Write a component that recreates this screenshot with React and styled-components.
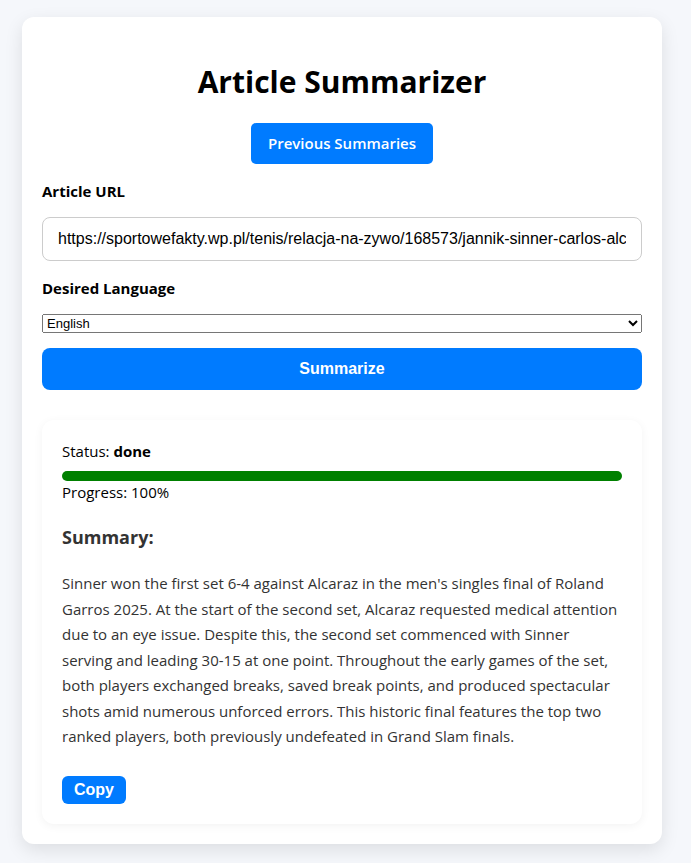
import React, { useState } from "react";
import styled, { createGlobalStyle } from "styled-components";

const GlobalStyle = createGlobalStyle`
  * { box-sizing: border-box; }
  body {
    margin: 0;
    background: #f5f7fb;
    color: #000;
    font-family: "Segoe UI", "Open Sans", "Noto Sans", sans-serif;
    font-size: 15px;
    line-height: 20px;
  }
`;

const Card = styled.main`
  max-width: 640px;
  margin: 17px auto 19px 22px;
  padding: 44px 20px 20px;
  background: #fff;
  border-radius: 12px;
  box-shadow: 0 6px 18px rgba(0, 0, 0, 0.1);
  display: flex;
  flex-direction: column;
`;

const Title = styled.h1`
  margin: 0 0 20px;
  font-size: 30px;
  line-height: 42px;
  font-weight: 700;
  text-align: center;
`;

const HistoryLink = styled.a`
  align-self: center;
  padding: 10px 17px;
  border-radius: 5px;
  background: #007bff;
  color: #fff;
  font-weight: 600;
  line-height: 21px;
  text-decoration: none;
`;

const Form = styled.form`
  display: flex;
  flex-direction: column;
`;

const Label = styled.label`
  margin-top: 17px;
  font-weight: 700;
  line-height: 21px;
`;

const UrlInput = styled.input`
  width: 100%;
  height: 44px;
  margin-top: 15px;
  padding: 0 15px;
  border: 1px solid #ccc;
  border-radius: 8px;
  background: #fff;
  color: #000;
  font: 16px "Liberation Sans", Arial, sans-serif;
`;

const LanguageSelect = styled.select`
  width: 100%;
  height: 19px;
  margin-top: 15px;
  font: 13px "Liberation Sans", Arial, sans-serif;
`;

const Button = styled.button`
  align-self: ${(p) => (p.$wide ? "stretch" : "flex-start")};
  height: ${(p) => (p.$wide ? "42px" : "28px")};
  margin-top: ${(p) => (p.$wide ? "15px" : "26px")};
  padding: 0 12px;
  border: 0;
  border-radius: ${(p) => (p.$wide ? "8px" : "6px")};
  background: #007bff;
  color: #fff;
  font: bold 16px "Liberation Sans", Arial, sans-serif;
  cursor: pointer;
`;

const Result = styled.section`
  margin-top: 30px;
  padding: 20px;
  border-radius: 12px;
  background: #fff;
  box-shadow: 0 2px 10px rgba(0, 0, 0, 0.05);
  display: flex;
  flex-direction: column;
`;

const StatusLine = styled.p`
  margin: 0;
  line-height: 22px;
`;

const Track = styled.div`
  height: 10px;
  margin-top: 9px;
  border-radius: 5px;
  background: #eee;
  overflow: hidden;
`;

const Fill = styled.div`
  height: 100%;
  background: green;
`;

const SummaryTitle = styled.h2`
  margin: 21px 0 0;
  color: #333;
  font-size: 18px;
  line-height: 26px;
  font-weight: 700;
`;

const SummaryText = styled.p`
  margin: 21px 0 0;
  color: #333;
  line-height: 1.7;
`;

const progress = 100;

export default function App() {
  const [url, setUrl] = useState(
    "https://sportowefakty.wp.pl/tenis/relacja-na-zywo/168573/jannik-sinner-carlos-alcaraz"
  );
  return (
    <>
      <GlobalStyle />
      <Card>
        <Title>Article Summarizer</Title>
        <HistoryLink href="#history">Previous Summaries</HistoryLink>
        <Form onSubmit={(e) => e.preventDefault()}>
          <Label htmlFor="url">Article URL</Label>
          <UrlInput id="url" type="text" value={url} onChange={(e) => setUrl(e.target.value)} />
          <Label htmlFor="language">Desired Language</Label>
          <LanguageSelect id="language" defaultValue="English">
            <option>English</option>
            <option>Polish</option>
          </LanguageSelect>
          <Button $wide type="submit">Summarize</Button>
        </Form>
        <Result>
          <StatusLine>Status: <strong>done</strong></StatusLine>
          <Track role="progressbar" aria-label="Progress" aria-valuenow={progress}>
            <Fill style={{ width: `${progress}%` }} />
          </Track>
          <StatusLine>Progress: {progress}%</StatusLine>
          <SummaryTitle>Summary:</SummaryTitle>
          <SummaryText>
            Sinner won the first set 6-4 against Alcaraz in the men's singles final of Roland
            Garros 2025. At the start of the second set, Alcaraz requested medical attention due
            to an eye issue. Despite this, the second set commenced with Sinner serving and
            leading 30-15 at one point. Throughout the early games of the set, both players
            exchanged breaks, saved break points, and produced spectacular shots amid numerous
            unforced errors. This historic final features the top two ranked players, both
            previously undefeated in Grand Slam finals.
          </SummaryText>
          <Button type="button">Copy</Button>
        </Result>
      </Card>
    </>
  );
}
